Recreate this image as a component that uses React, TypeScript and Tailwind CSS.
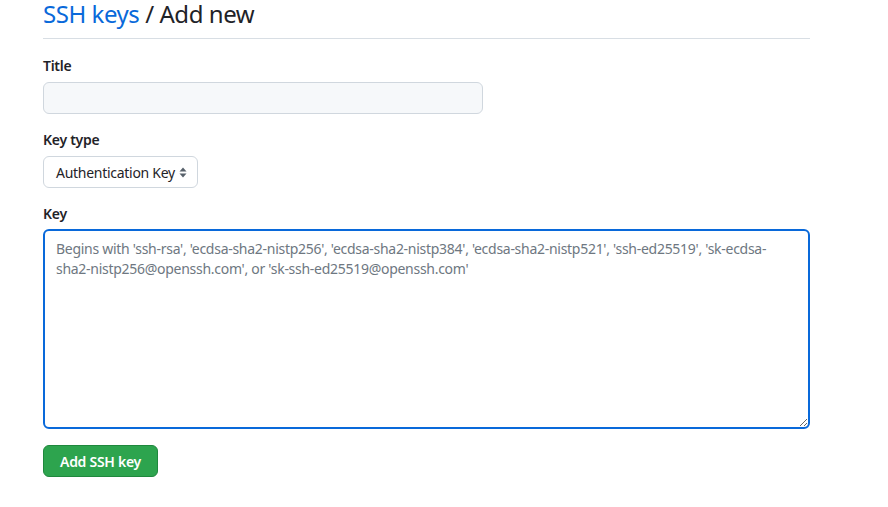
export default function App() {
  return (
    <div className="min-h-screen bg-white font-['Noto_Sans',sans-serif] text-[#1f2328] tracking-[-0.28px]">
      <div className="ml-[43px] w-[767px]">
        {/* Subhead */}
        <div className="h-[39px] border-b border-[#d8dee4] flex items-start">
          <h1 className="text-[24px] leading-[28px] font-normal tracking-[-0.45px]">
            <a className="text-[#0969da]">SSH keys</a> / Add new
          </h1>
        </div>

        <form className="pt-[18px]">
          <label className="block text-[14px] font-semibold leading-[18px] mb-[7px]">Title</label>
          <input
            type="text"
            className="block w-[440px] h-[32px] rounded-[6px] border border-[#d0d7de] bg-[#f6f8fa] px-3 text-[14px] outline-none"
          />

          <label className="block text-[14px] font-semibold leading-[18px] mt-[17px] mb-[7px]">Key type</label>
          <div className="relative w-[155px] h-[32px] rounded-[6px] border border-[#d0d7de] bg-white flex items-center pl-[12px] text-[14px]">
            <span>Authentication Key</span>
            <svg className="absolute right-[10px] top-[10px]" width="8" height="11" viewBox="0 0 8 11">
              <path d="M4 0.5 L7.5 4.5 H0.5 Z" fill="#57606a" />
              <path d="M4 10.5 L7.5 6.5 H0.5 Z" fill="#57606a" />
            </svg>
          </div>

          <label className="block text-[14px] font-semibold leading-[18px] mt-[17px] mb-[6px]">Key</label>
          <textarea
            className="block w-[767px] h-[200px] rounded-[6px] border-2 border-[#0969da] bg-white px-[11px] py-[8px] text-[14px] leading-[20px] outline-none resize-y placeholder:text-[#6e7781]"
            placeholder="Begins with 'ssh-rsa', 'ecdsa-sha2-nistp256', 'ecdsa-sha2-nistp384', 'ecdsa-sha2-nistp521', 'ssh-ed25519', 'sk-ecdsa-sha2-nistp256@openssh.com', or 'sk-ssh-ed25519@openssh.com'"
          />

          <button
            type="button"
            className="mt-[16px] h-[32px] px-[16px] rounded-[6px] bg-[#2da44e] border border-[#1f883d] text-white text-[14px] font-semibold"
          >
            Add SSH key
          </button>
        </form>
      </div>
    </div>
  );
}
